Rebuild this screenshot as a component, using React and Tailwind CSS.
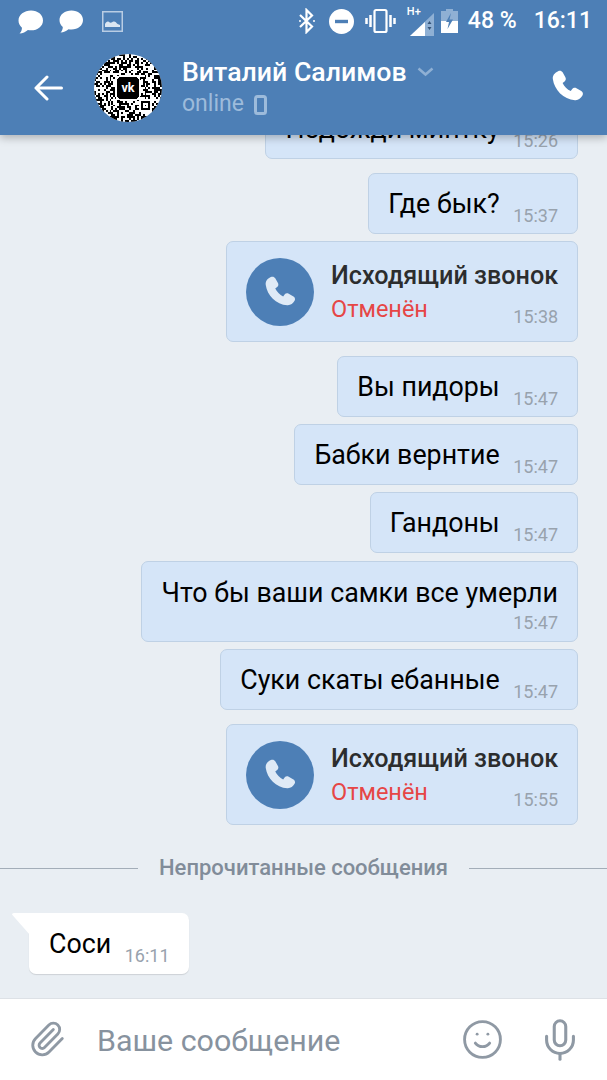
import React from 'react';
import { Paperclip, Smile, Mic } from 'lucide-react';

const FONT = 'font-[Roboto,"Noto_Sans",sans-serif]';

const PhoneGlyph = ({ className }) => (
  <svg className={className} viewBox="0 0 24 24" fill="currentColor">
    <path d="M6.2 2.6c1-.6 2.2-.3 2.8.7l1.7 3c.5.9.3 2-.5 2.6l-1.2.9c.9 2 2.9 4.1 5 5l.9-1.2c.6-.8 1.7-1 2.6-.5l3 1.7c1 .6 1.3 1.8.7 2.8-1 1.7-2.6 3-4.6 2.8C9.5 19.9 3.9 14 3 7.5c-.3-2 .9-3.9 3.2-4.9z" />
  </svg>
);

const ChatBubble = ({ className }) => (
  <svg className={className} viewBox="0 0 24 24" fill="white">
    <path d="M12.5 1.5C19 1.5 24 5.6 24 11s-5 9.500-11.500 9.500c-1 0-2-.1-3-.3C7.500 22 4.500 23.500 1.500 23.500c1.500-1.500 2.300-3.500 2.300-5.600C1.500 16 .5 13.600.5 11 .5 5.600 6 1.500 12.500 1.500z" />
  </svg>
);

const PictureIcon = () => (
  <svg className="w-[21px] h-[21px]" viewBox="0 0 21 21" fill="none">
    <rect x="0.75" y="0.75" width="19.500" height="19.500" stroke="#b9cde4" strokeWidth="1.500" />
    <path d="M3 16v-3c1-2 2.500-3 4-2 2 1.500 3 0 4.500-.5 1.500-.5 2.500.8 3 1.500 1 1 2 1.500 3.500 2v2z" fill="#dbe6f2" />
  </svg>
);

const BluetoothIcon = () => (
  <svg className="w-[18px] h-[26px]" viewBox="0 0 18 26" fill="none" stroke="white" strokeWidth="2.200">
    <path d="M2 7l12 11.500L8.500 24V2L14 7.500 2 19" />
    <circle cx="16" cy="13" r="1" fill="white" stroke="none" />
    <circle cx="2" cy="13" r="1" fill="white" stroke="none" />
  </svg>
);

const DndIcon = () => (
  <svg className="w-[25px] h-[25px]" viewBox="0 0 25 25">
    <circle cx="12.500" cy="12.500" r="12.500" fill="white" />
    <rect x="6" y="10.800" width="13" height="3.400" fill="#4d7fb6" />
  </svg>
);

const VibrateIcon = () => (
  <svg className="w-[31px] h-[26px]" viewBox="0 0 31 26" fill="none" stroke="white">
    <rect x="9.500" y="2" width="12" height="22" rx="1.500" strokeWidth="2.200" />
    <path d="M5.500 7v12M1.500 10v6M25.500 7v12M29.500 10v6" strokeWidth="2.500" />
  </svg>
);

const SignalIcon = () => (
  <div className="relative w-[24px] h-[30px]">
    <svg className="absolute left-0 top-[7px] w-[24px] h-[23px]" viewBox="0 0 24 23">
      <path d="M24 0v23H0z" fill="#8fb0d4" />
      <path d="M15 9v14H0z" fill="white" />
      <path d="M19.500 8l2 3h-4zM19.500 17l2-3h-4z" fill="#35557a" />
    </svg>
    <span className="absolute left-[-3px] top-[-1px] text-[11px] leading-[14px] text-white font-medium">H+</span>
  </div>
);

const BatteryIcon = () => (
  <svg className="w-[17px] h-[24px]" viewBox="0 0 17 24">
    <path d="M5 0h7v2h5v22H0V2h5z" fill="#8fb0d4" />
    <path d="M0 12h17v12H0z" fill="white" />
    <path d="M10 4l-5 9h3l-1.500 7 5.500-9.500H8.500z" fill="#4d7fb6" />
  </svg>
);

// deterministic fake QR pattern for the avatar
const qrCells = () => {
  const cells = [];
  let seed = 11;
  for (let y = 0; y < 35; y++) {
    for (let x = 0; x < 35; x++) {
      seed = (seed * 1103515245 + 12345) & 0x7fffffff;
      if ((seed >> 16) % 100 < 50) cells.push([x, y]);
    }
  }
  return cells;
};

const Finder = ({ x, y }) => (
  <g>
    <rect x={x - 1} y={y - 1} width="7" height="7" fill="white" />
    <rect x={x} y={y} width="5" height="5" fill="black" />
    <rect x={x + 1} y={y + 1} width="3" height="3" fill="white" />
    <rect x={x + 2} y={y + 2} width="1" height="1" fill="black" />
  </g>
);

const QrAvatar = () => (
  <div className="w-[68px] h-[68px] rounded-full overflow-hidden bg-white shrink-0">
    <svg className="w-full h-full" viewBox="0 0 35 35" shapeRendering="crispEdges">
      {qrCells().map(([x, y]) => (
        <rect key={`${x}-${y}`} x={x} y={y} width="1" height="1" fill="black" />
      ))}
      <Finder x={24} y={24} />
      <rect x="11.500" y="11.500" width="12" height="12" rx="2" fill="black" stroke="white" strokeWidth="1" />
      <text x="17.500" y="19.500" textAnchor="middle" fontSize="6.500" fontWeight="700" fill="white" fontFamily="Roboto">vk</text>
    </svg>
  </div>
);

const Time = ({ children }) => (
  <span className="text-[18px] leading-[21px] text-[#98a2ad] shrink-0">{children}</span>
);

const TextBubble = ({ text, time, className = 'mt-[7px]' }) => (
  <div className={`${className} shrink-0 h-[61px] flex items-start pl-[19px] pr-[19px] bg-[#d5e5f8] border border-[#bfd1e5] rounded-[7px]`}>
    <span className="mt-[14px] text-[26.8px] leading-[32px] text-black whitespace-nowrap">{text}</span>
    <span className="ml-[13.5px] mt-[31px]"><Time>{time}</Time></span>
  </div>
);

const WideBubble = ({ text, time }) => (
  <div className="mt-[8px] shrink-0 h-[81px] flex flex-col items-end pl-[20px] pr-[19px] bg-[#d5e5f8] border border-[#bfd1e5] rounded-[7px]">
    <span className="mt-[15px] text-[26.8px] leading-[32px] text-black whitespace-nowrap">{text}</span>
    <span className="mt-[3px]"><Time>{time}</Time></span>
  </div>
);

const CallBubble = ({ time, className }) => (
  <div className={`${className} shrink-0 w-[352px] h-[101px] flex items-center pl-[19px] pr-[19px] bg-[#d5e5f8] border border-[#bfd1e5] rounded-[7px]`}>
    <div className="w-[68px] h-[68px] rounded-full bg-[#4d7fb6] flex items-center justify-center shrink-0">
      <PhoneGlyph className="w-[38px] h-[38px] text-[#dfeaf6]" />
    </div>
    <div className="ml-[17px] pt-[2px] flex-1 flex flex-col">
      <span className="text-[25.2px] leading-[30px] font-medium text-[#2c2d2e] whitespace-nowrap">Исходящий звонок</span>
      <div className="mt-[3px] flex items-end justify-between">
        <span className="text-[23.5px] leading-[30px] text-[#e64646]">Отменён</span>
        <span className="mb-[-6px]"><Time>{time}</Time></span>
      </div>
    </div>
  </div>
);

export default function App() {
  return (
    <div className={`${FONT} w-full h-[1080px] flex flex-col overflow-hidden bg-[#e9eef3]`}>
      <header className="relative z-10 shrink-0 h-[135px] bg-[#4d7fb6] shadow-[0_3px_8px_rgba(0,0,0,0.25)]">
        <div className="h-[42px] flex items-center justify-between pl-[18px] pr-[15px]">
          <div className="flex items-center">
            <ChatBubble className="w-[25px] h-[25px]" />
            <ChatBubble className="ml-[16px] w-[24px] h-[24px]" />
            <div className="ml-[19px]"><PictureIcon /></div>
          </div>
          <div className="flex items-center text-white">
            <BluetoothIcon />
            <div className="ml-[13px]"><DndIcon /></div>
            <div className="ml-[11px]"><VibrateIcon /></div>
            <div className="ml-[14px]"><SignalIcon /></div>
            <div className="ml-[7px]"><BatteryIcon /></div>
            <span className="ml-[10px] text-[23px] font-medium">48 %</span>
            <span className="ml-[17px] text-[23px] font-medium">16:11</span>
          </div>
        </div>
        <div className="h-[93px] flex items-start pl-[34px] pr-[20px]">
          <svg className="mt-[32px] w-[29px] h-[28px]" viewBox="0 0 29 28" fill="none" stroke="white" strokeWidth="3" strokeLinecap="round" strokeLinejoin="round">
            <path d="M27.500 14H2M13 3L2 14l11 11" />
          </svg>
          <div className="ml-[31px] mt-[12px]"><QrAvatar /></div>
          <div className="ml-[20px] mt-[14px] flex-1 flex flex-col">
            <div className="flex items-center">
              <span className="text-[26.7px] leading-[32px] font-medium text-white">Виталий Салимов</span>
              <svg className="ml-[10px] w-[17px] h-[10px]" viewBox="0 0 17 10" fill="none" stroke="#8fb0d4" strokeWidth="2.500">
                <path d="M1.500 1.500l7 6 7-6" />
              </svg>
            </div>
            <div className="mt-[1px] flex items-center text-[#9dbbdb]">
              <span className="text-[23px] leading-[30px]">online</span>
              <svg className="ml-[10px] mt-[2px] w-[13px] h-[20px]" viewBox="0 0 13 20" fill="none" stroke="currentColor" strokeWidth="3">
                <rect x="1.500" y="1.500" width="10" height="17" rx="2" />
              </svg>
            </div>
          </div>
          <PhoneGlyph className="mt-[25px] w-[39px] h-[39px] text-white" />
        </div>
      </header>

      <main className="flex-1 min-h-0 overflow-hidden flex flex-col justify-end pb-[24px]">
        <div className="shrink-0 flex flex-col items-end pr-[29px]">
          <TextBubble text="Подожди минтку" time="15:26" />
          <TextBubble text="Где бык?" time="15:37" className="mt-[14px]" />
          <CallBubble time="15:38" className="mt-[7px]" />
          <TextBubble text="Вы пидоры" time="15:47" className="mt-[14px]" />
          <TextBubble text="Бабки вернтие" time="15:47" />
          <TextBubble text="Гандоны" time="15:47" />
          <WideBubble text="Что бы ваши самки все умерли" time="15:47" />
          <TextBubble text="Суки скаты ебанные" time="15:47" />
          <CallBubble time="15:55" className="mt-[14px]" />
        </div>

        <div className="shrink-0 mt-[30px] flex items-center">
          <div className="flex-1 h-px bg-[#a3adb8]" />
          <span className="mx-[21px] text-[22px] leading-[26px] font-medium text-[#818c99]">Непрочитанные сообщения</span>
          <div className="flex-1 h-px bg-[#a3adb8]" />
        </div>

        <div className="shrink-0 mt-[32px] ml-[29px] self-start relative flex items-start h-[61px] pl-[20px] pr-[19px] bg-white rounded-[7px] rounded-tl-none shadow-[0_1px_1px_rgba(0,0,0,0.12)]">
          <svg className="absolute left-[-17px] top-0 w-[18px] h-[22px]" viewBox="0 0 18 22">
            <path d="M0 1.500Q0 0 2 0h16v22z" fill="white" />
          </svg>
          <span className="mt-[15px] text-[26.8px] leading-[32px] text-black">Соси</span>
          <span className="ml-[13.5px] mt-[32px]"><Time>16:11</Time></span>
        </div>
      </main>

      <footer className="shrink-0 h-[82px] bg-white border-t border-[#dde1e6] flex items-center pl-[28px] pr-[24px] text-[#8f99a4]">
        <Paperclip className="w-[38px] h-[38px] shrink-0 mb-[2px]" strokeWidth={1.8} />
        <span className="ml-[31px] mt-[3px] flex-1 text-[30.4px] leading-[36px] text-[#87929e]">Ваше сообщение</span>
        <Smile className="w-[43px] h-[43px] shrink-0" strokeWidth={1.6} />
        <Mic className="ml-[33px] w-[46px] h-[46px] shrink-0" strokeWidth={1.6} />
      </footer>
    </div>
  );
}
